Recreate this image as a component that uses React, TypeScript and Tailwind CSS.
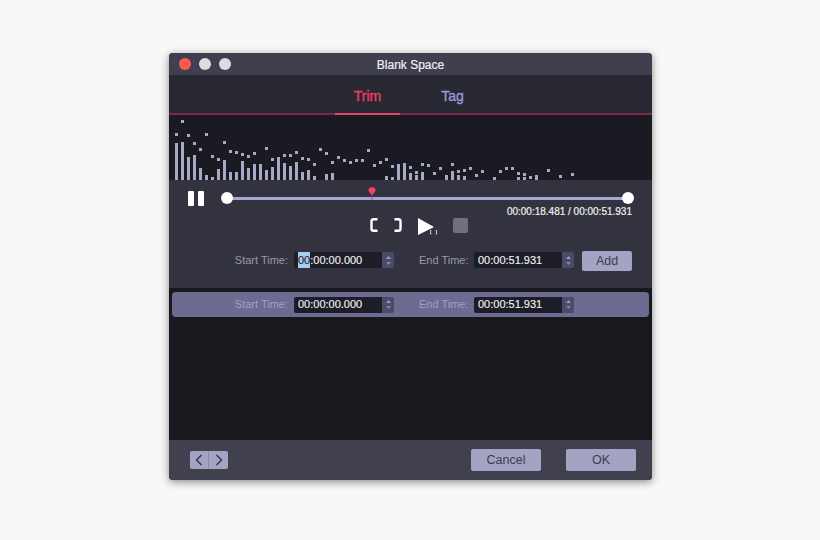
import React from 'react';

// [bar height, peak dot offset from the bottom] (0 = nothing drawn)
const wave: [number, number][] = [
  [37, 44], [38, 57], [23, 43], [25, 35], [12, 29], [5, 44], [3, 22], [11, 19], [20, 36], [8, 27], [8, 26],
  [19, 24], [12, 22], [16, 25], [16, 0], [10, 30], [13, 19], [23, 0], [17, 23], [14, 23], [18, 26], [8, 20],
  [10, 19], [4, 14], [0, 29], [6, 25], [7, 16], [0, 21], [0, 18], [0, 16], [0, 18], [0, 18], [0, 28],
  [0, 13], [0, 16], [4, 19], [3, 12], [16, 0], [17, 0], [7, 11], [5, 6], [8, 14], [0, 13], [0, 5],
  [0, 10], [5, 0], [9, 14], [5, 7], [4, 8], [0, 10], [0, 3], [0, 7], [0, 0], [3, 0], [0, 7], [0, 10],
  [0, 10], [3, 5], [3, 4], [0, 1], [5, 0], [0, 0], [0, 8], [0, 0], [0, 2], [0, 0], [0, 4],
];

const Waveform = () => (
  <div className="h-[65px] bg-[#1a1b22] pl-[6px] flex items-end gap-[3px]">
    {wave.map(([bar, dot], i) => (
      <div key={i} className="w-[3px] flex flex-col justify-end">
        {dot > 0 && (
          <div className="w-[3px] h-[3px] bg-[#a9a8c5]" style={{ marginBottom: Math.max(dot - bar, 0) }} />
        )}
        {bar > 0 && <div className="w-[3px] bg-[#a9a8c5]" style={{ height: bar }} />}
      </div>
    ))}
  </div>
);

const Stepper = () => (
  <div className="w-3 h-full bg-[#4b4a68] flex flex-col items-center justify-center gap-[3px] rounded-r-[2px]">
    <svg width="5" height="3" viewBox="0 0 5 3">
      <path d="M2.5 0 5 3H0z" fill="#9d9cb8" />
    </svg>
    <svg width="5" height="3" viewBox="0 0 5 3">
      <path d="M2.5 3 5 0H0z" fill="#8584a2" />
    </svg>
  </div>
);

const TimeInput = ({ value, selected }: { value: string; selected?: boolean }) => (
  <div className="w-[100px] h-4 flex">
    <div className="w-[88px] bg-[#1d1d28] rounded-l-[2px] pl-1 flex items-center text-[11px] text-[#f0f0f0] [-webkit-text-stroke:0.15px_#f0f0f0]">
      {selected ? (
        <>
          <span className="bg-[#a8cff2] text-[#23232e] [-webkit-text-stroke:0.15px_#23232e]">{value.slice(0, 2)}</span>
          {value.slice(2)}
        </>
      ) : (
        value
      )}
    </div>
    <Stepper />
  </div>
);

const TimeFields = ({ selected, labelClass }: { selected?: boolean; labelClass: string }) => (
  <>
    <span className={`w-[54px] text-right text-[11px] whitespace-nowrap ${labelClass}`}>Start Time:</span>
    <div className="ml-[6px]">
      <TimeInput value="00:00:00.000" selected={selected} />
    </div>
    <span className={`ml-[25px] w-[49px] text-right text-[11px] whitespace-nowrap ${labelClass}`}>End Time:</span>
    <div className="ml-[6px]">
      <TimeInput value="00:00:51.931" />
    </div>
  </>
);

const Bracket = ({ flip }: { flip?: boolean }) => (
  <svg width="9" height="14" viewBox="0 0 9 14" className={flip ? 'scale-x-[-1]' : ''}>
    <path d="M7.5 1.2H3.5Q1.5 1.2 1.5 3.2V10.8Q1.5 12.8 3.5 12.8H7.5" fill="none" stroke="#fff" strokeWidth="2.4" />
  </svg>
);

const Transport = () => (
  <div className="h-[17px] pl-[201px] flex items-start">
    <Bracket />
    <div className="ml-[14px]">
      <Bracket flip />
    </div>
    <div className="ml-[16px] w-[19px] h-[17px] relative">
      <svg width="19" height="17" viewBox="0 0 19 17">
        <path d="M0 0 16 9 0 17z" fill="#fff" />
        <path d="M13.5 12.5H12.5V16H13.5M17.5 12.5H18.5V16H17.5" fill="none" stroke="#e8e8ee" strokeWidth="0.8" />
      </svg>
    </div>
    <div className="ml-[16px] w-[15px] h-[15px] rounded-[2px] bg-[#70707c]" />
  </div>
);

const Slider = () => (
  <div className="relative w-[413px] h-3 flex items-center">
    <div className="absolute left-0 top-[-1px] w-3 h-3 rounded-full bg-white" />
    <div className="w-full mx-[6px] h-[3px] bg-[#a8a6d4]" />
    <div className="absolute right-0 top-[-1px] w-3 h-3 rounded-full bg-white" />
    <svg className="absolute left-[147px] top-[-6px]" width="8" height="13" viewBox="0 0 8 13">
      <path d="M4 8.2 1 4.8C-.4 2.8.8.2 4 .2s4.400 2.600 3 4.600z" fill="#f04468" />
      <path d="M4 8v5" stroke="#b03a58" strokeWidth="0.8" />
    </svg>
  </div>
);

const LightButton = ({ label, width, height }: { label: string; width: string; height: string }) => (
  <button className={`${width} ${height} rounded-[2px] bg-[#a4a3c3] text-[12.5px] text-[#3c3c4c] pt-[1px]`}>{label}</button>
);

const App: React.FC = () => {
  return (
    <div className="w-[820px] h-[540px] bg-[#f8f8f8] pt-[53px] pl-[169px] overflow-hidden font-['Liberation_Sans',Arial,sans-serif]">
      <div className="w-[483px] h-[427px] rounded-[4px] overflow-hidden shadow-[0_2px_8px_rgba(0,0,0,0.45)] flex flex-col bg-[#18191f]">
        {/* Title bar */}
        <div className="h-[22px] bg-[#3f3f50] relative flex items-center justify-center">
          <div className="absolute left-[10px] top-[5px] flex gap-2">
            <span className="w-3 h-3 rounded-full bg-[#fb5a50]" />
            <span className="w-3 h-3 rounded-full bg-[#dcdcdc]" />
            <span className="w-3 h-3 rounded-full bg-[#dcdcdc]" />
          </div>
          <span className="text-xs text-[#f0f0f0] pt-[1px] [-webkit-text-stroke:0.2px_#f0f0f0]">Blank Space</span>
        </div>

        {/* Tabs */}
        <div className="h-10 bg-[#282833] border-b-2 border-[#7a2a42] flex justify-center gap-5 pr-[1px]">
          <div className="w-[65px] h-10 border-b-2 border-[#e0486f] flex items-center justify-center pt-[3px] text-sm text-[#f23a66] [-webkit-text-stroke:0.35px_#f23a66]">
            Trim
          </div>
          <div className="w-[65px] h-10 flex items-center justify-center pt-[1px] text-sm text-[#9a99d6] [-webkit-text-stroke:0.35px_#9a99d6]">
            Tag
          </div>
        </div>

        <Waveform />

        {/* Controls */}
        <div className="h-[108px] bg-[#33333f] pt-[11px]">
          <div className="flex items-center pl-[19px]">
            <div className="flex gap-1">
              <div className="w-[6px] h-[15px] rounded-[1px] bg-white" />
              <div className="w-[6px] h-[15px] rounded-[1px] bg-white" />
            </div>
            <div className="ml-[17px]">
              <Slider />
            </div>
          </div>
          <div className="h-3 pr-5 text-right text-[10px] leading-3 text-[#f0f0f0] [-webkit-text-stroke:0.2px_#f0f0f0]">
            00:00:18.481 / 00:00:51.931
          </div>
          <Transport />
          <div className="mt-[15px] h-5 pl-[65px] flex items-center">
            <TimeFields selected labelClass="text-[#9a98b0]" />
            <div className="ml-2">
              <LightButton label="Add" width="w-[50px]" height="h-5" />
            </div>
          </div>
        </div>

        {/* Segment list */}
        <div className="flex-1 pt-1 px-[3px]">
          <div className="h-[25px] rounded-[4px] bg-[#6d6b90] pl-[62px] flex items-center">
            <TimeFields labelClass="text-[#a09ed2]" />
          </div>
        </div>

        {/* Footer */}
        <div className="h-10 bg-[#40404f] pl-[21px] pr-4 flex items-center">
          <div className="w-[38px] h-[18px] rounded-[2px] bg-[#a4a3c3] flex">
            <div className="w-[19px] border-r border-[#8a88ac] flex items-center justify-center">
              <svg width="8" height="12" viewBox="0 0 8 12">
                <path d="M6.500 1 1.500 6l5 5" fill="none" stroke="#33333f" strokeWidth="1.4" />
              </svg>
            </div>
            <div className="w-[19px] flex items-center justify-center">
              <svg width="8" height="12" viewBox="0 0 8 12">
                <path d="M1.500 1l5 5-5 5" fill="none" stroke="#33333f" strokeWidth="1.4" />
              </svg>
            </div>
          </div>
          <div className="ml-auto flex gap-[25px]">
            <LightButton label="Cancel" width="w-[70px]" height="h-[22px]" />
            <LightButton label="OK" width="w-[70px]" height="h-[22px]" />
          </div>
        </div>
      </div>
    </div>
  );
};

export default App;
